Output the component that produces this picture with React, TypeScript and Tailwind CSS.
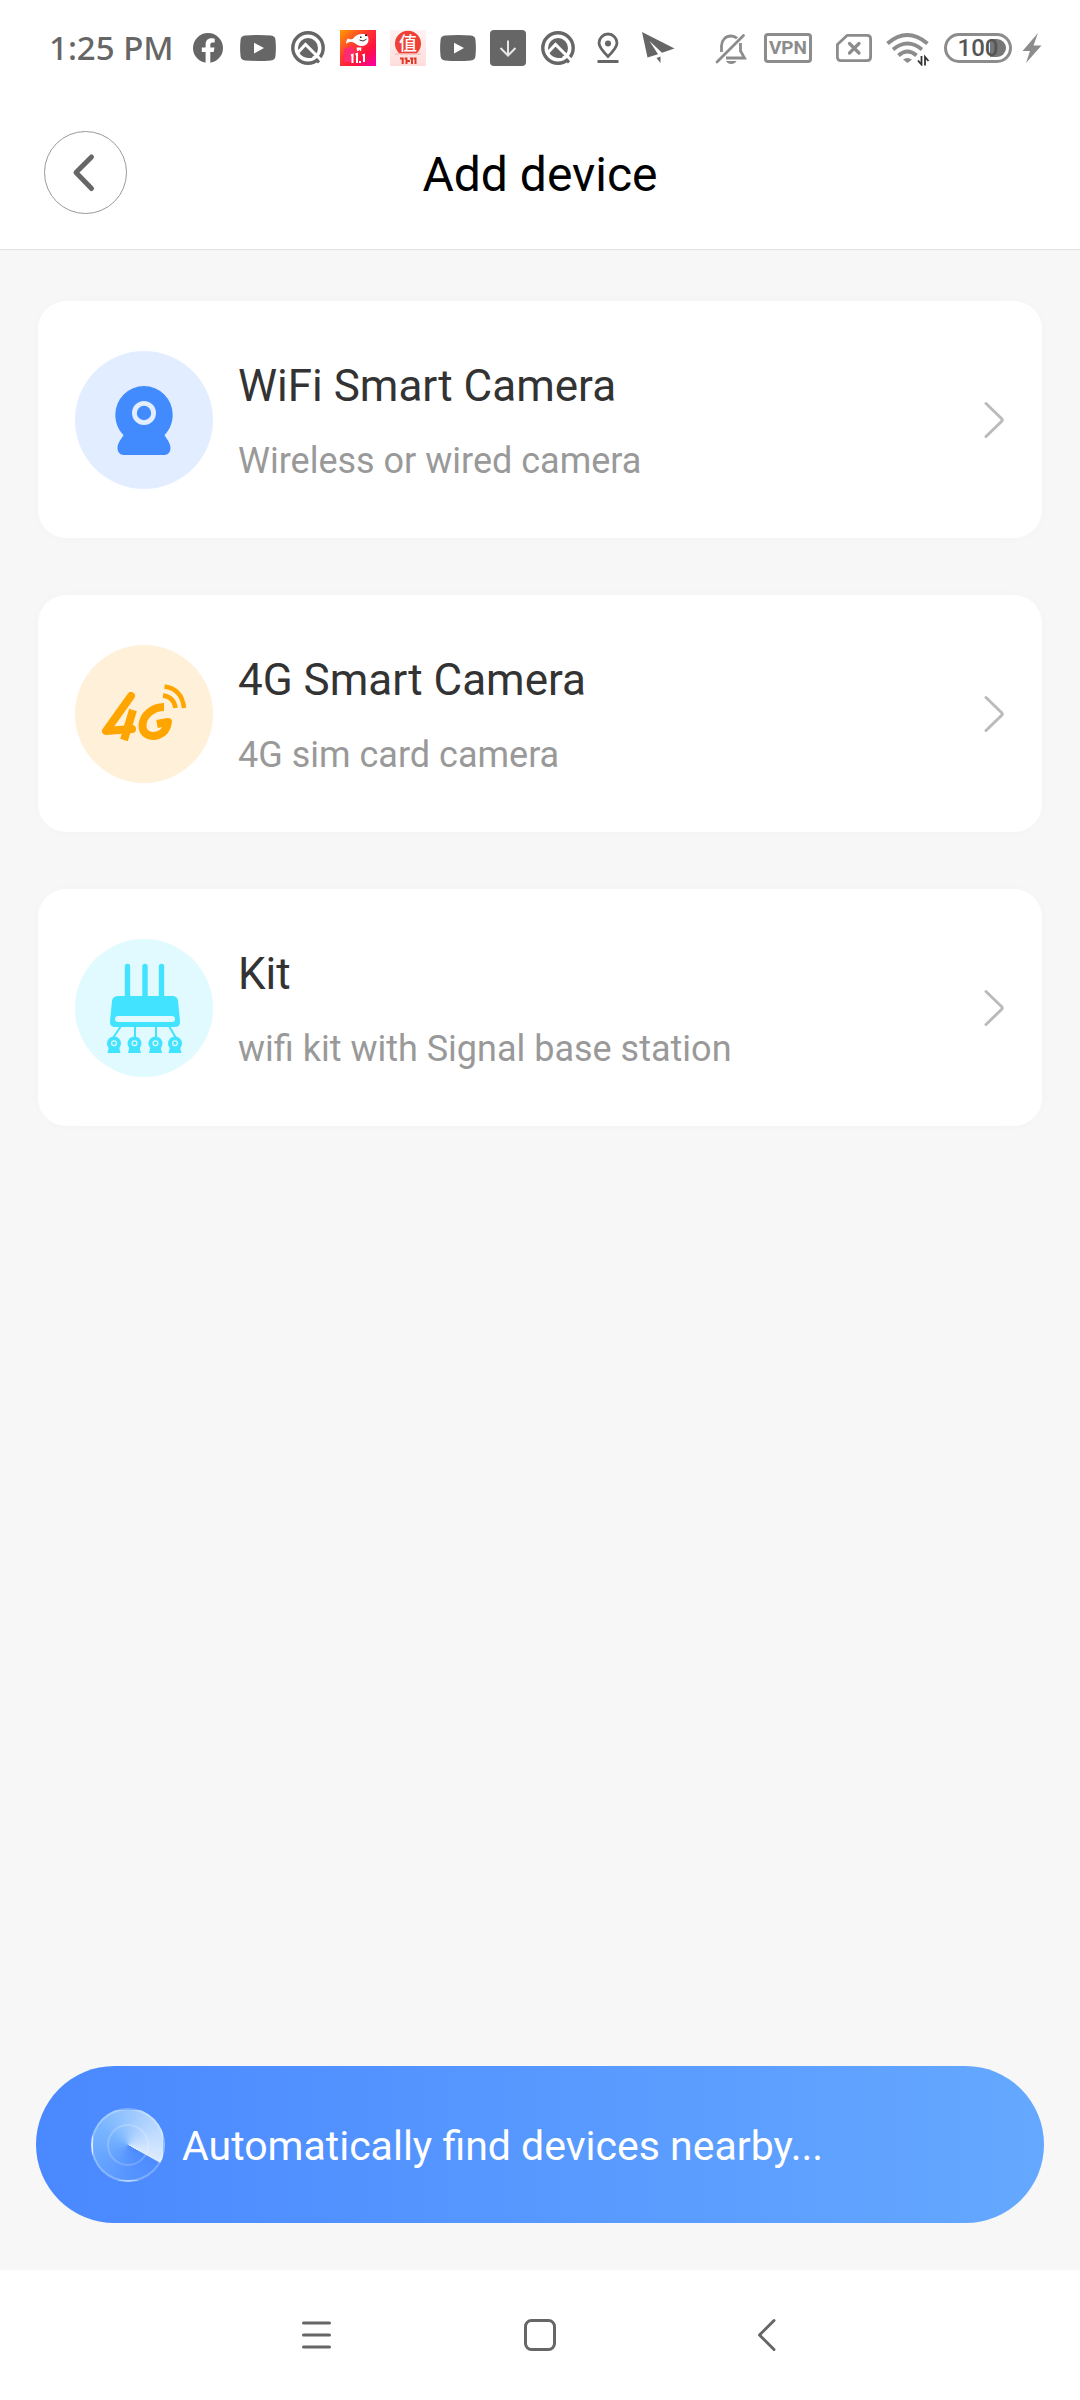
import React from "react";

type IconProps = { className?: string };

function FacebookIcon() {
  return (
    <svg className="size-9" viewBox="0 0 36 36" fill="#666">
      <circle cx="18" cy="18" r="15" />
      <path
        fill="#fff"
        d="M15.6 34V22h-3.8v-4.400h3.800v-3.200c0-4 2.300-6.100 5.800-6.100 1.300 0 2.700.2 3.300.4v3.700h-2c-1.900 0-2.400 1.100-2.400 2.300v2.900h4.200L23.700 22h-3.400v12z"
      />
    </svg>
  );
}

function YoutubeIcon() {
  return (
    <svg className="size-9" viewBox="0 0 36 36" fill="#666">
      <path d="M5 5.600Q18 4.400 31 5.600Q35 6 35.400 9.500Q36.400 18 35.400 26.500Q35 30 31 30.400Q18 31.400 5 30.400Q1 30 .6 26.500Q-.4 18 .6 9.500Q1 6 5 5.600Z" />
      <path fill="#fff" d="M14 12.800 24 18l-10 5.500z" />
    </svg>
  );
}

function QuickIcon() {
  return (
    <svg className="size-9" viewBox="0 0 36 36" fill="none">
      <circle cx="18" cy="18" r="15.200" stroke="#666" strokeWidth="3.400" />
      <circle cx="18" cy="18" r="10" fill="#666" />
      <path d="M8 22.500 15.500 14.500 32 31" stroke="#fff" strokeWidth="3" />
      <path d="M12.500 23.500 15.500 20l7 7.500q-6 2-10-4z" fill="#666" />
      <path d="m26 29.500 3 3" stroke="#666" strokeWidth="3" />
    </svg>
  );
}

function DogSaleIcon() {
  return (
    <svg className="size-9" viewBox="0 0 36 36">
      <defs>
        <linearGradient id="dogSale" x1="0" y1="0" x2="1" y2="1">
          <stop offset="0" stopColor="#ff9a00" />
          <stop offset=".4" stopColor="#ff3a30" />
          <stop offset=".7" stopColor="#ff1040" />
          <stop offset="1" stopColor="#f400b0" />
        </linearGradient>
      </defs>
      <path fill="url(#dogSale)" d="M0 0h36v36H0z" />
      <path fill="#ff2a70" d="M4 19l8-3 3 6-4 10H4z" />
      <path
        fill="#fff"
        d="M6 14c0-3 1-4.500 2-5.500 1.500 1 3 1 5 .2C15 6 18 4 22 4c4 0 6.500 1.500 6.500 5.500S26 16 21.500 16c-4 0-5.500-2.500-8-3.500C11 11.500 8 12 6 14zM16.500 17.500h5L21 21h-1l-.5-1.500-1 1.500h-1.500z"
      />
      <path d="M19.500 10q3.500 2.500 7-.8" fill="none" stroke="#333" />
      <path fill="#222" d="M20 6.500h1.500V8H20zM25 4.500h2V6h-2z" />
      <path
        fill="none"
        stroke="#fff"
        strokeWidth="2"
        d="M11 25.500l1.500-.5v8M15.500 24.500 17 24v9M20 31v2M22.500 25.500 24 25v7"
      />
    </svg>
  );
}

function ZhiIcon() {
  return (
    <span className="relative flex size-9 flex-col items-center bg-gradient-to-b from-[#fdf3f3] to-[#ffdcdc]">
      <svg className="size-9" viewBox="0 0 36 36">
        <path fill="#ee4035" d="M9.500 23.500a13 13 0 1 1 17 0z" />
        <path d="M5 24h26" stroke="#f8b0a8" />
        <path
          fill="none"
          stroke="#e03a28"
          strokeWidth="2"
          d="M10 28.400h2.700V34M14.500 28.400h2V34M17.500 31h2.500M20 28.400h2V34M23.500 28.400h2V34"
        />
      </svg>
      <span className="absolute top-1 text-[18px] leading-[20px] font-medium text-white">值</span>
    </span>
  );
}

function DownloadIcon() {
  return (
    <svg className="size-9" viewBox="0 0 36 36">
      <rect width="36" height="36" rx="4" fill="#666" />
      <path d="M18 10.500v15M10.500 18l7.500 7.500 7.500-7.500" fill="none" stroke="#e8e8e8" strokeWidth="2" />
    </svg>
  );
}

function PinIcon() {
  return (
    <svg className="size-9" viewBox="0 0 36 36" fill="none">
      <path
        d="M18 26.500C12 20.500 9 17 9 13a9 9 0 0 1 18 0c0 4-3 7.500-9 13.500z"
        stroke="#666"
        strokeWidth="2.800"
      />
      <circle cx="18" cy="13.500" r="3" fill="#666" />
      <path d="M7.500 31.500h21" stroke="#666" strokeWidth="3" />
    </svg>
  );
}

function PlaneIcon() {
  return (
    <svg className="size-9" viewBox="0 0 36 36" fill="#666">
      <path d="M2 2 34.500 18.500 22 22.800 9.500 11 18 24.200 7.500 27.500z" />
      <path d="m16.500 28 4-1.500V33z" />
    </svg>
  );
}

function BellOffIcon() {
  return (
    <svg className="size-9" viewBox="0 0 36 36" fill="none" stroke="#8c8c8c" strokeWidth="2.800">
      <path d="M7.500 22v-6.500c0-5 4-9.500 9.500-9.500 2.500 0 4.500.8 6 2.200M26.500 13v8l4 7H12" />
      <path d="M3 32 29.500 5.500" strokeLinecap="round" />
      <path d="M12 31h10.500q-1.500 3-5.200 3T12 31z" fill="#8c8c8c" stroke="none" />
    </svg>
  );
}

function SimOffIcon() {
  return (
    <svg className="size-9" viewBox="0 0 36 36" fill="none" stroke="#8c8c8c" strokeWidth="2.800">
      <path d="M11 5.400h20q3.600 0 3.600 3.400v18.400q0 3.400-3.600 3.400H5q-3.600 0-3.600-3.400V14.500z" strokeLinejoin="round" />
      <path d="m13.500 13.500 9.500 9.500m0-9.500L13.500 23" strokeWidth="3.200" strokeLinecap="round" />
    </svg>
  );
}

function WifiIcon() {
  return (
    <svg className="h-9 w-11" viewBox="0 0 44 36" fill="none" stroke="#8c8c8c" strokeWidth="3.800">
      <path d="M1.500 13.500q19.500-17 40 0M7 19.500q14.500-12 29 0M12.500 25.500q9-8 18 0" />
      <path d="M17 29.500q4.500-3 9 0L21.500 33z" fill="#8c8c8c" stroke="none" />
      <path d="M35.500 26v8.500L32 30.500M39 35.500V27l3.500 4" stroke="#333" strokeWidth="1.800" />
    </svg>
  );
}

function BoltIcon() {
  return (
    <svg className="h-9 w-5" viewBox="0 0 20 36" fill="#8c8c8c">
      <path d="M16 3 .5 21H8L4 33 19.500 15.500H11.500z" />
    </svg>
  );
}

function Battery() {
  return (
    <span className="relative -mr-1 flex h-[30px] w-[68px] items-center justify-center overflow-hidden rounded-full border-[3px] border-[#8c8c8c]">
      <span className="absolute top-[3px] right-[3px] h-[18px] w-4 rounded-r-full bg-[#777]" />
      <span className="relative text-[24px] leading-6 font-medium text-[#555]">100</span>
    </span>
  );
}

function StatusBar() {
  return (
    <div className="flex h-24 items-center justify-between pr-[38px] pl-[49px]">
      <div className="flex items-center gap-[14px]">
        <span className="w-[127px] font-['Noto_Sans'] text-[33px] leading-9 font-medium whitespace-nowrap text-[#666]">
          1:25 PM
        </span>
        <FacebookIcon />
        <YoutubeIcon />
        <QuickIcon />
        <DogSaleIcon />
        <ZhiIcon />
        <YoutubeIcon />
        <DownloadIcon />
        <QuickIcon />
        <PinIcon />
        <PlaneIcon />
      </div>
      <div className="flex items-center gap-[14px]">
        <BellOffIcon />
        <span className="mr-[10px] flex h-[30px] w-12 items-center justify-center rounded-sm border-[3px] border-[#8c8c8c] text-[19px] font-bold text-[#8c8c8c]">
          VPN
        </span>
        <SimOffIcon />
        <WifiIcon />
        <Battery />
        <BoltIcon />
      </div>
    </div>
  );
}

function CameraIcon({ className }: IconProps) {
  return (
    <svg className={className} viewBox="0 0 138 138">
      <circle cx="69" cy="69" r="69" fill="#e2eeff" />
      <path
        fill="#428bff"
        d="M69 35a28.700 28.700 0 0 1 28.700 28.700c0 8-3 15-8.200 20.300 2.500 4.500 6 8 6 13 0 4-2.500 7-6 7h-41c-3.500 0-6-3-6-7 0-5 3.500-8.500 6-13-5.200-5.300-8.200-12.300-8.200-20.300A28.700 28.700 0 0 1 69 35z"
      />
      <circle cx="69" cy="62" r="9.600" fill="none" stroke="#e2eeff" strokeWidth="4.800" />
    </svg>
  );
}

function FourGIcon({ className }: IconProps) {
  return (
    <svg className={className} viewBox="0 0 138 138" fill="none">
      <circle cx="69" cy="69" r="69" fill="#fff0d9" />
      <g stroke="#ffa500" strokeLinecap="round" strokeLinejoin="round">
        <path d="M56 51 31 86l26-2" strokeWidth="8" />
        <path d="M58 65 49 95" strokeWidth="8" strokeLinecap="butt" />
        <path d="M89 62C78 62 68 70 67.500 80c-.5 9 8 13 16 10 6-2 8.500-6 9.500-13l-11 2" strokeWidth="8" strokeLinecap="butt" />
        <path d="M88 50.500Q99 52 100.500 63" strokeWidth="4.500" strokeLinecap="butt" />
        <path d="M89.500 41.500Q107 44 109 63" strokeWidth="4.500" strokeLinecap="butt" />
      </g>
    </svg>
  );
}

const kitCameras = [39, 59.500, 80.500, 100];

function KitIcon({ className }: IconProps) {
  return (
    <svg className={className} viewBox="0 0 138 138" fill="#42e3ff">
      <circle cx="69" cy="69" r="69" fill="#e1faff" />
      <path d="M52.500 27.500v32M70 27.500v32M86.500 27.500v32" stroke="#42e3ff" strokeWidth="5.400" strokeLinecap="round" />
      <path d="M44 57h53q5.500 0 6 5l2 20q.5 6-5.500 6H40q-5.500 0-5-6l2-20q.5-5 7-5z" />
      <rect x="40" y="77" width="60" height="6" rx="3" fill="#e1faff" />
      <path d="M46 87 38 99M60 87v12M81 87v12M94 87l7 12" stroke="#42e3ff" strokeWidth="2" />
      {kitCameras.map((x) => (
        <g key={x}>
          <circle cx={x} cy="104.500" r="7" />
          <path d={`M${x - 5} 108h10l1.500 6h-13z`} />
          <circle cx={x} cy="104.200" r="2.400" fill="none" stroke="#e1faff" strokeWidth="1.300" />
        </g>
      ))}
    </svg>
  );
}

const devices = [
  { title: "WiFi Smart Camera", detail: "Wireless or wired camera", Icon: CameraIcon },
  { title: "4G Smart Camera", detail: "4G sim card camera", Icon: FourGIcon },
  { title: "Kit", detail: "wifi kit with Signal base station", Icon: KitIcon },
];

function DeviceCard({ title, detail, Icon }: (typeof devices)[number]) {
  return (
    <button
      type="button"
      className="flex w-full items-center rounded-[28px] bg-white pt-[50px] pr-[37px] pb-[49px] pl-[37px] text-left shadow-[0_0_12px_rgba(0,0,0,0.02)]"
    >
      <Icon className="size-[138px] shrink-0" />
      <span className="ml-[25px] flex grow flex-col gap-[27px] pt-[2px]">
        <span className="text-[44px] leading-[52px] text-[#333]">{title}</span>
        <span className="text-[36px] leading-[44px] text-[#999]">{detail}</span>
      </span>
      <svg className="h-10 w-[22px] shrink-0" viewBox="0 0 22 40" fill="none">
        <path d="m3 3.500 15.500 15q1.500 1.500 0 3L3 36.500" stroke="#bbb" strokeWidth="3" strokeLinecap="round" />
      </svg>
    </button>
  );
}

function RadarIcon() {
  return (
    <span className="relative size-[74px] rounded-full border-2 border-white/25 bg-[conic-gradient(from_120deg,rgba(255,255,255,0)_0deg,rgba(130,190,255,0.2)_60deg,rgba(130,190,255,0.8)_180deg,rgba(220,235,255,1)_358deg,rgba(255,255,255,0)_360deg)]">
      <span className="absolute inset-[14px] rounded-full border-2 border-white/20" />
    </span>
  );
}

export default function App() {
  return (
    <div className="flex min-h-screen flex-col bg-[#f7f7f7] font-[Roboto,'Noto_Sans_CJK_SC',sans-serif]">
      <header className="border-b border-[#e2e2e2] bg-white">
        <StatusBar />
        <div className="grid h-[153px] grid-cols-[83px_1fr_83px] items-center px-11">
          <button
            type="button"
            aria-label="Back"
            className="flex size-[83px] items-center justify-center rounded-full border border-[#999]"
          >
            <svg className="size-10" viewBox="0 0 40 40" fill="none">
              <path d="M25.500 4 10 19.500l15.500 16" stroke="#666" strokeWidth="5" strokeLinecap="round" strokeLinejoin="round" />
            </svg>
          </button>
          <h1 className="pt-1 text-center text-[48px] leading-[56px] text-black">Add device</h1>
        </div>
      </header>

      <main className="flex grow flex-col px-9 pt-[51px] pb-[47px]">
        <div className="flex flex-col gap-[57px] px-[2px]">
          {devices.map((device) => (
            <DeviceCard key={device.title} {...device} />
          ))}
        </div>
        <button
          type="button"
          className="mt-auto flex h-[157px] w-full items-center gap-[17px] rounded-full bg-gradient-to-r from-[#4a88ff] to-[#65a8ff] pl-[55px] text-[41px] leading-[48px] text-white"
        >
          <RadarIcon />
          <span className="pt-[2px]">Automatically find devices nearby...</span>
        </button>
      </main>

      <nav className="flex h-[130px] items-center justify-center gap-[190px] bg-white">
        <button type="button" aria-label="Recent apps">
          <svg className="size-9" viewBox="0 0 36 36" fill="none" stroke="#666" strokeWidth="3" strokeLinecap="round">
            <path d="M7.500 6h26M7.500 18h26M7.500 30h26" />
          </svg>
        </button>
        <button type="button" aria-label="Home">
          <svg className="size-9" viewBox="0 0 36 36" fill="none" stroke="#666" strokeWidth="3">
            <rect x="3.500" y="3.500" width="29" height="29" rx="6" />
          </svg>
        </button>
        <button type="button" aria-label="Go back">
          <svg className="size-9" viewBox="0 0 36 36" fill="none" stroke="#666" strokeWidth="3" strokeLinecap="round" strokeLinejoin="round">
            <path d="M26 3.500 11.500 18 26 32.500" />
          </svg>
        </button>
      </nav>
    </div>
  );
}
